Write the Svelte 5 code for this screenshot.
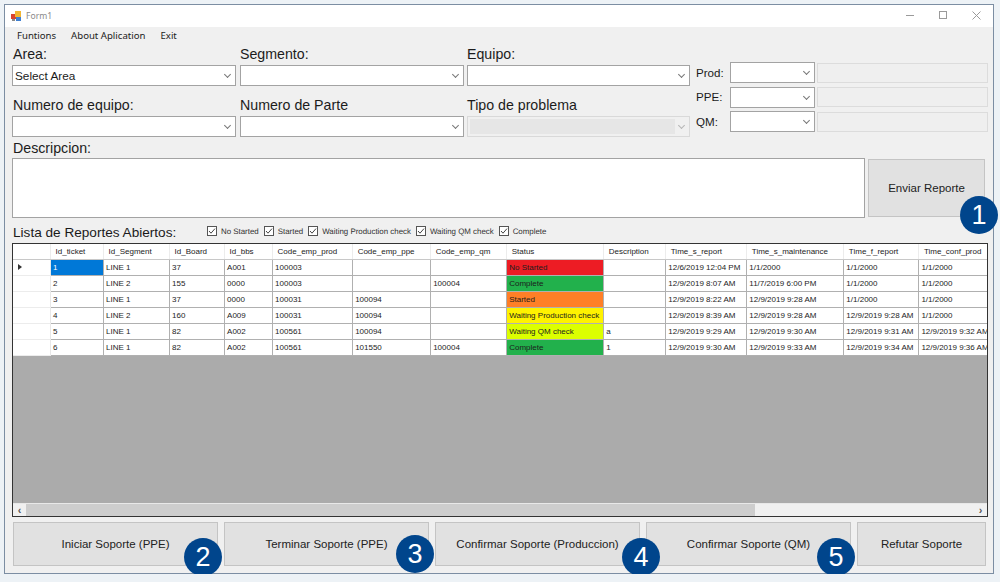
<script>
  const columns = [
    { name: "Id_ticket", w: 53 },
    { name: "Id_Segment", w: 66 },
    { name: "Id_Board", w: 55 },
    { name: "Id_bbs", w: 48 },
    { name: "Code_emp_prod", w: 80 },
    { name: "Code_emp_ppe", w: 78 },
    { name: "Code_emp_qm", w: 76 },
    { name: "Status", w: 97 },
    { name: "Description", w: 62 },
    { name: "Time_s_report", w: 81 },
    { name: "Time_s_maintenance", w: 97 },
    { name: "Time_f_report", w: 75 },
    { name: "Time_conf_prod", w: 80 },
  ];

  const rows = [
    ["1", "LINE 1", "37", "A001", "100003", "", "", "No Started", "", "12/6/2019 12:04 PM", "1/1/2000", "1/1/2000", "1/1/2000"],
    ["2", "LINE 2", "155", "0000", "100003", "", "100004", "Complete", "", "12/9/2019 8:07 AM", "11/7/2019 6:00 PM", "1/1/2000", "1/1/2000"],
    ["3", "LINE 1", "37", "0000", "100031", "100094", "", "Started", "", "12/9/2019 8:22 AM", "12/9/2019 9:28 AM", "1/1/2000", "1/1/2000"],
    ["4", "LINE 2", "160", "A009", "100031", "100094", "", "Waiting Production check", "", "12/9/2019 8:39 AM", "12/9/2019 9:28 AM", "12/9/2019 9:28 AM", "1/1/2000"],
    ["5", "LINE 1", "82", "A002", "100561", "100094", "", "Waiting QM check", "a", "12/9/2019 9:29 AM", "12/9/2019 9:30 AM", "12/9/2019 9:31 AM", "12/9/2019 9:32 AM"],
    ["6", "LINE 1", "82", "A002", "100561", "101550", "100004", "Complete", "1", "12/9/2019 9:30 AM", "12/9/2019 9:33 AM", "12/9/2019 9:34 AM", "12/9/2019 9:36 AM"],
  ];

  const statusClass = {
    "No Started": "red",
    "Complete": "green",
    "Started": "orange",
    "Waiting Production check": "yellow",
    "Waiting QM check": "lime",
  };

  const filters = ["No Started", "Started", "Waiting Production check", "Waiting QM check", "Complete"];

  const people = ["Prod:", "PPE:", "QM:"];

  const actions = [
    { label: "Iniciar Soporte (PPE)", badge: "2" },
    { label: "Terminar Soporte (PPE)", badge: "3", spot: "high" },
    { label: "Confirmar Soporte (Produccion)", badge: "4", spot: "far" },
    { label: "Confirmar Soporte (QM)", badge: "5" },
    { label: "Refutar Soporte" },
  ];
</script>

<div class="window">
  <div class="titlebar">
    <svg class="appicon" width="11" height="11" viewBox="0 0 11 11">
      <rect x="0" y="3" width="5" height="5" fill="#d8432f" />
      <rect x="4" y="0" width="6" height="6" fill="#f2b632" />
      <rect x="5" y="6" width="5" height="4" fill="#3f7fd0" />
      <rect x="1" y="8" width="3" height="2" fill="#8a8a8a" />
    </svg>
    <span class="title">Form1</span>
    <div class="winbtns">
      <svg width="9" height="9" viewBox="0 0 9 9"><path d="M0 4.5h8" stroke="#9a9a9a" fill="none" /></svg>
      <svg width="9" height="9" viewBox="0 0 9 9"><rect x="0.5" y="0.5" width="7" height="7" stroke="#9a9a9a" fill="none" /></svg>
      <svg width="9" height="9" viewBox="0 0 9 9"><path d="M0.5 0.5l8 8M8.5 0.5l-8 8" stroke="#9a9a9a" fill="none" /></svg>
    </div>
  </div>

  <div class="menu">
    <span>Funtions</span>
    <span>About Aplication</span>
    <span>Exit</span>
  </div>

  <div class="form">
    <div class="fields">
      <div class="field">
        <span class="label">Area:</span>
        <div class="combo"><span>Select Area</span><i class="chev"></i></div>
      </div>
      <div class="field">
        <span class="label">Segmento:</span>
        <div class="combo"><span></span><i class="chev"></i></div>
      </div>
      <div class="field">
        <span class="label">Equipo:</span>
        <div class="combo"><span></span><i class="chev"></i></div>
      </div>
      <div class="field">
        <span class="label">Numero de equipo:</span>
        <div class="combo"><span></span><i class="chev"></i></div>
      </div>
      <div class="field">
        <span class="label">Numero de Parte</span>
        <div class="combo"><span></span><i class="chev"></i></div>
      </div>
      <div class="field">
        <span class="label">Tipo de problema</span>
        <div class="combo disabled"><span></span><i class="chev"></i></div>
      </div>
    </div>
    <div class="people">
      {#each people as p}
        <div class="person">
          <span class="plabel">{p}</span>
          <div class="combo small"><span></span><i class="chev"></i></div>
          <div class="readonly"></div>
        </div>
      {/each}
    </div>
  </div>

  <div class="descsec">
    <span class="label">Descripcion:</span>
    <div class="descrow">
      <div class="textarea"></div>
      <div class="sendwrap">
        <button class="btn send">Enviar Reporte</button>
        <span class="badge">1</span>
      </div>
    </div>
  </div>

  <div class="listhead">
    <span class="listlabel">Lista de Reportes Abiertos:</span>
    <div class="filters">
      {#each filters as f}
        <span class="filter">
          <svg width="10" height="10" viewBox="0 0 10 10">
            <rect x="0.5" y="0.5" width="9" height="9" fill="#fff" stroke="#555" />
            <path d="M2 5l2 2.2L8 2.6" fill="none" stroke="#444" />
          </svg>
          {f}
        </span>
      {/each}
    </div>
  </div>

  <div class="grid">
    <div class="gridbody">
      <table>
        <thead>
          <tr>
            <th class="rowhead"></th>
            {#each columns as c}
              <th style="width:{c.w}px">{c.name}</th>
            {/each}
          </tr>
        </thead>
        <tbody>
          {#each rows as row, r}
            <tr>
              <td class="rowhead">
                {#if r === 0}<i class="marker"></i>{/if}
              </td>
              {#each row as cell, c}
                <td class={c === 7 ? statusClass[cell] : r === 0 && c === 0 ? "selected" : ""}>{cell}</td>
              {/each}
            </tr>
          {/each}
        </tbody>
      </table>
    </div>
    <div class="hscroll">
      <span class="arrow">‹</span>
      <div class="track"><div class="thumb"></div></div>
      <span class="arrow">›</span>
    </div>
  </div>

  <div class="actions">
    {#each actions as a}
      <div class="action">
        <button class="btn">{a.label}</button>
        {#if a.badge}<span class="badge {a.spot ?? ''}">{a.badge}</span>{/if}
      </div>
    {/each}
  </div>
</div>

<style>
  :global(body) {
    background: #edf2f6;
    font-family: "Liberation Sans", Arial, sans-serif;
    color: #1a1a1a;
  }

  .window {
    margin: 4px 6px 0 4px;
    width: 990px;
    height: 570px;
    box-sizing: border-box;
    border: 1px solid #7c8ea3;
    background: #f0f0f0;
    overflow: visible;
  }

  .titlebar {
    height: 22px;
    background: #fff;
    display: flex;
    align-items: center;
    padding-left: 6px;
  }

  .appicon {
    margin-right: 4px;
  }

  .title {
    font-family: "Noto Sans", sans-serif;
    font-size: 8.6px;
    color: #8a8a8a;
  }

  .winbtns {
    margin-left: auto;
    display: flex;
    gap: 24px;
    padding-right: 12px;
    margin-top: -1px;
  }

  .menu {
    height: 17px;
    display: flex;
    align-items: center;
    gap: 15px;
    padding-left: 12px;
    font-family: "Noto Sans", sans-serif;
    font-size: 9.6px;
    color: #222;
  }

  .form {
    display: flex;
    padding-left: 7px;
  }

  .fields {
    display: grid;
    grid-template-columns: 228px 227px 223px;
    grid-auto-rows: 51px;
    margin-top: 0;
    width: 684px;
  }

  .field {
    display: flex;
    flex-direction: column;
  }

  .label {
    font-size: 14.2px;
    line-height: 21px;
    height: 21px;
    color: #1c1c1c;
  }

  .field:nth-child(3n + 1) .label,
  .descsec .label {
    padding-left: 1px;
  }

  .combo {
    box-sizing: border-box;
    width: 224px;
    height: 21px;
    background: #fff;
    border: 1px solid #a3a3a3;
    display: flex;
    align-items: center;
    font-size: 11.8px;
    padding-left: 2px;
    position: relative;
  }

  .field:nth-child(3n) .combo {
    width: 223px;
  }

  .combo.disabled {
    background: #f0f0f0;
    border-color: #d9d9d9;
  }

  .combo.disabled::before {
    content: "";
    position: absolute;
    left: 2px;
    top: 2px;
    bottom: 2px;
    right: 14px;
    background: #e6e6e6;
  }

  .combo.disabled .chev {
    border-color: #b5b5b5;
  }

  .chev {
    position: absolute;
    right: 5px;
    top: 6px;
    width: 4px;
    height: 4px;
    border-right: 1px solid #777;
    border-bottom: 1px solid #777;
    transform: rotate(45deg);
  }

  .people {
    display: flex;
    flex-direction: column;
    gap: 3.5px;
    margin-top: 18px;
  }

  .person {
    display: flex;
    align-items: center;
    height: 21px;
  }

  .plabel {
    width: 34px;
    font-size: 11.6px;
    margin-top: -1px;
  }

  .combo.small {
    width: 85px;
  }

  .readonly {
    box-sizing: border-box;
    width: 171px;
    height: 20px;
    margin-left: 2px;
    border: 1px solid #dcdcdc;
    background: #efefef;
  }

  .descsec {
    padding-left: 7px;
    margin-top: -8px;
  }

  .descrow {
    display: flex;
    gap: 3px;
    margin-top: -1px;
  }

  .textarea {
    box-sizing: border-box;
    width: 853px;
    height: 60px;
    background: #fff;
    border: 1px solid #a3a3a3;
  }

  .sendwrap {
    position: relative;
    margin-top: 1px;
  }

  .btn {
    display: block;
    box-sizing: border-box;
    width: 100%;
    height: 100%;
    background: #e1e1e1;
    border: 1px solid #c4c4c4;
    font-family: "Liberation Sans", Arial, sans-serif;
    font-size: 11.5px;
    color: #222;
    padding: 0;
  }

  .send {
    width: 117px;
    height: 58px;
  }

  .badge {
    position: absolute;
    z-index: 1;
    width: 38px;
    height: 38px;
    border-radius: 50%;
    background: #00458c;
    color: #fff;
    font-size: 27px;
    line-height: 38px;
    text-align: center;
    right: -13px;
    top: 37px;
  }

  .action .badge {
    right: -4px;
    top: 16px;
  }

  .action .badge.high {
    right: -5px;
    top: 13px;
  }

  .action .badge.far {
    right: -20px;
    top: 16px;
  }

  .listhead {
    display: flex;
    align-items: center;
    height: 25px;
    padding-left: 8px;
  }

  .listlabel {
    font-size: 13.6px;
    width: 194px;
    margin-top: 3px;
  }

  .filters {
    display: flex;
    gap: 5px;
    margin-top: 1px;
    font-size: 7.9px;
    text-rendering: geometricPrecision;
    color: #333;
  }

  .filter {
    display: flex;
    align-items: center;
    gap: 4px;
  }

  .grid {
    box-sizing: border-box;
    width: 976px;
    height: 274px;
    margin-left: 7px;
    border: 1px solid #333;
    background: #ababab;
    display: flex;
    flex-direction: column;
  }

  .gridbody {
    flex: 1;
    overflow: hidden;
  }

  table {
    table-layout: fixed;
    border-collapse: collapse;
    width: 986px;
    font-size: 8px;
    color: #1c1c1c;
  }

  th {
    height: 15px;
    padding: 0 0 0 5px;
    background: #fff;
    font-weight: normal;
    text-align: left;
    white-space: nowrap;
    overflow: hidden;
    border-right: 1px solid #ececec;
    border-bottom: 1px solid #c8c8c8;
    box-sizing: border-box;
  }

  th.rowhead {
    width: 37px;
  }

  td {
    height: 16px;
    padding: 0 0 0 2.5px;
    background: #fff;
    white-space: nowrap;
    overflow: hidden;
    border-right: 1px solid #b0b0b0;
    border-bottom: 1px solid #b0b0b0;
    box-sizing: border-box;
  }

  td.rowhead {
    border-right: 1px solid #e8e8e8;
    border-bottom: 1px solid #ececec;
    padding-left: 5px;
  }

  .marker {
    display: block;
    width: 0;
    height: 0;
    border-left: 4px solid #333;
    border-top: 3.5px solid transparent;
    border-bottom: 3.5px solid transparent;
  }

  .selected {
    background: #0078d7;
    color: #fff;
  }

  .red { background: #ed1c24; }
  .green { background: #22b14c; }
  .orange { background: #ff7f27; }
  .yellow { background: #fff200; }
  .lime { background: #dcff00; }

  .hscroll {
    height: 12px;
    background: #f0f0f0;
    border-top: 1px solid #e8e8e8;
    display: flex;
    align-items: center;
  }

  .arrow {
    width: 13px;
    text-align: center;
    font-size: 11px;
    font-weight: bold;
    line-height: 12px;
    color: #555;
  }

  .track {
    flex: 1;
    height: 100%;
  }

  .thumb {
    width: 729px;
    height: 100%;
    background: #cdcdcd;
  }

  .actions {
    display: flex;
    gap: 6px;
    padding-left: 8px;
    margin-top: 5px;
  }

  .action {
    position: relative;
    width: 205px;
    height: 44px;
  }

  .action:last-child {
    width: 129px;
  }
</style>
